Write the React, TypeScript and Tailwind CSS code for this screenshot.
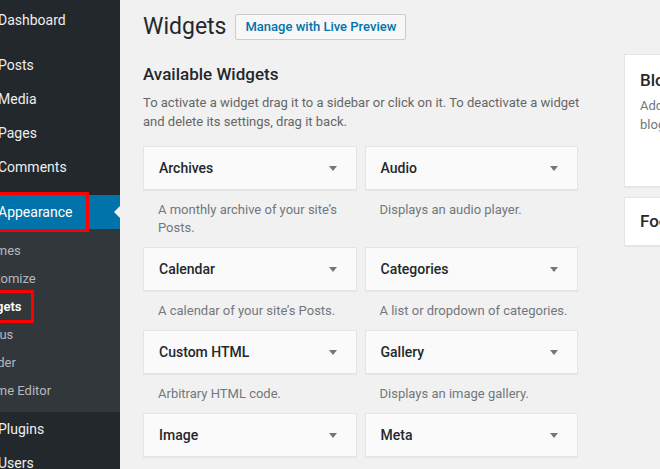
import React from 'react';

const font = { fontFamily: 'Roboto, "Noto Sans", Arial, sans-serif' };

const topItems = ['Posts', 'Media', 'Pages', 'Comments'];
const subItems = ['Themes', 'Customize', 'Widgets', 'Menus', 'Header', 'Theme Editor'];

const widgets = [
  { name: 'Archives', desc: "A monthly archive of your site\u2019s Posts." },
  { name: 'Audio', desc: 'Displays an audio player.' },
  { name: 'Calendar', desc: "A calendar of your site\u2019s Posts." },
  { name: 'Categories', desc: 'A list or dropdown of categories.' },
  { name: 'Custom HTML', desc: 'Arbitrary HTML code.' },
  { name: 'Gallery', desc: 'Displays an image gallery.' },
  { name: 'Image', desc: '' },
  { name: 'Meta', desc: '' },
];

function Sidebar() {
  return (
    <div className="w-[120px] shrink-0 overflow-hidden bg-[#23282d]">
      <div className="ml-[-38px] w-[160px] pt-[3px]">
        <div className="flex h-[34px] items-center pl-[36px] pt-[1px] text-[14px] text-[#eeeeee]">Dashboard</div>
        <div className="h-[11px]" />
        {topItems.map((t) => (
          <div key={t} className="flex h-[34px] items-center pl-[36px] pt-[1px] text-[14px] text-[#eeeeee]">
            {t}
          </div>
        ))}
        <div className="h-[11px]" />
        {/* current menu */}
        <div className="relative flex h-[34px] items-center bg-[#0073aa] pl-[36px] pt-[1px] text-[14px] text-white">
          Appearance
          <div className="absolute left-[20px] top-[-3px] h-[40px] w-[107px] border-[3px] border-[#ff0000]" />
          <div className="absolute right-0 top-[9px] h-0 w-0 border-y-[8px] border-r-[8px] border-y-transparent border-r-[#f1f1f1]" />
        </div>
        <div className="bg-[#32373c] pb-[8px] pt-[7px]">
          {subItems.map((s) => (
            <div
              key={s}
              className={
                s === 'Widgets'
                  ? 'relative flex h-[28px] items-center pl-[12px] pt-[1px] text-[13px] font-semibold text-white'
                  : 'flex h-[28px] items-center pl-[12px] pt-[1px] text-[13px] text-[#b4b9be]'
              }
            >
              {s}
              {s === 'Widgets' && (
                <div className="absolute left-[20px] top-[-2px] h-[33px] w-[52px] border-[3px] border-[#ff0000]" />
              )}
            </div>
          ))}
        </div>
        <div className="flex h-[34px] items-center pl-[36px] pt-[1px] text-[14px] text-[#eeeeee]">Plugins</div>
        <div className="flex h-[34px] items-center pl-[36px] pt-[1px] text-[14px] text-[#eeeeee]">Users</div>
      </div>
    </div>
  );
}

function Arrow() {
  return <div className="h-0 w-0 border-x-[4px] border-t-[5px] border-x-transparent border-t-[#72777c]" />;
}

export default function App() {
  return (
    <div className="flex h-[469px] w-[660px] overflow-hidden" style={font}>
      <Sidebar />
      <div className="min-w-0 flex-1 overflow-hidden bg-[#f1f1f1] pl-[23px]">
        <div className="flex items-center pt-[12px]">
          <h1 className="text-[23px] leading-[29px] text-[#23282d]">Widgets</h1>
          <button className="ml-[9px] rounded-[2px] border border-[#cccccc] bg-[#f7f7f7] px-[9px] py-[3px] text-[13px] font-medium leading-[18px] text-[#0073aa]">
            Manage with Live Preview
          </button>
        </div>
        <div className="flex">
          <div className="w-[435px] shrink-0">
            <h2 className="mt-[22px] text-[17px] font-medium leading-[23px] text-[#23282d]">Available Widgets</h2>
            <p className="mr-[-20px] mt-[7px] text-[13px] leading-[19px] text-[#666666]">
              To activate a widget drag it to a sidebar or click on it. To deactivate a widget and delete its settings, drag it back.
            </p>
            <div className="mt-[15px] grid grid-cols-2 gap-x-[8px]">
              {widgets.map((w) => (
                <div key={w.name}>
                  <div className="flex h-[44px] items-center justify-between border border-[#e5e5e5] bg-[#fafafa] pl-[15px] pr-[19px] pt-[1px] shadow-[0_1px_1px_rgba(0,0,0,0.04)]">
                    <span className="text-[14px] font-medium text-[#23282d]">{w.name}</span>
                    <Arrow />
                  </div>
                  <p className="mb-[10px] mt-[11px] pl-[15px] pr-[10px] text-[13px] leading-[18px] text-[#72777c]">{w.desc}</p>
                </div>
              ))}
            </div>
          </div>
          <div className="ml-[46px] mt-[13px] w-[310px] shrink-0">
            <div className="h-[133px] border border-[#e5e5e5] bg-white px-[15px] pt-[14px] shadow-[0_1px_1px_rgba(0,0,0,0.04)]">
              <h2 className="text-[17px] font-medium leading-[23px] text-[#23282d]">Blog Sidebar</h2>
              <p className="mt-[4px] text-[13px] leading-[19px] text-[#72777c]">
                Add widgets here to appear in your sidebar on blog posts and archive pages.
              </p>
            </div>
            <div className="mt-[10px] flex h-[49px] items-center border border-[#e5e5e5] bg-white px-[15px] shadow-[0_1px_1px_rgba(0,0,0,0.04)]">
              <h2 className="text-[17px] font-medium leading-[23px] text-[#23282d]">Footer 1</h2>
            </div>
          </div>
        </div>
      </div>
    </div>
  );
}
